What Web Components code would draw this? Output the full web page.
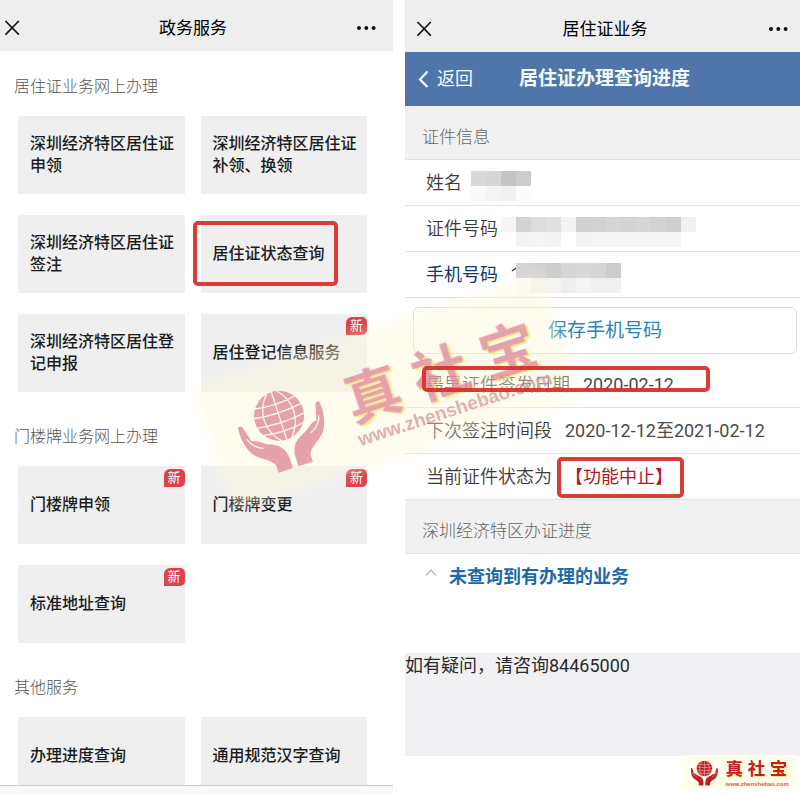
<!DOCTYPE html>
<html lang="zh-CN">
<head>
<meta charset="UTF-8">
<meta name="viewport" content="width=device-width, initial-scale=1.0">
<title>政务服务</title>
<style>
    body {
        margin: 0;
        background: #fff;
        font-family: Roboto, "Noto Sans CJK SC", sans-serif;
        color: #222;
    }
    main {
        position: relative;
        display: grid;
        grid-template-columns: 393fr 395fr;
        gap: 12px;
        height: 100vh;
        overflow: hidden;
    }
    .watermark {
        position: absolute;
        left: calc(50% - 12px); top: calc(50% - 5px);
        width: 366px; height: 130px;
        transform: translate(-50%, -50%) rotate(-18deg);
        pointer-events: none;
    }
    .corner {
        position: absolute;
        right: 4px; bottom: 5px;
        width: 114px; height: 34px;
    }
</style>
</head>
<body>
<main>
    <phone-screen class="services" bar>
        <nav-bar slot="top">政务服务</nav-bar>
        <service-group label="居住证业务网上办理">
            <service-tile>深圳经济特区居住证申领</service-tile>
            <service-tile>深圳经济特区居住证补领、换领</service-tile>
            <service-tile>深圳经济特区居住证签注</service-tile>
            <service-tile>居住证状态查询<mark-box slot="mark" style="--left: -8px; --top: 6px; --width: 145px; --height: 65px"></mark-box></service-tile>
            <service-tile>深圳经济特区居住登记申报</service-tile>
            <service-tile badge="新">居住登记信息服务</service-tile>
        </service-group>
        <service-group label="门楼牌业务网上办理">
            <service-tile badge="新">门楼牌申领</service-tile>
            <service-tile badge="新">门楼牌变更</service-tile>
            <service-tile badge="新">标准地址查询</service-tile>
        </service-group>
        <service-group label="其他服务">
            <service-tile>办理进度查询</service-tile>
            <service-tile>通用规范汉字查询</service-tile>
        </service-group>
    </phone-screen>

    <phone-screen>
        <nav-bar slot="top" inset>居住证业务</nav-bar>
        <title-bar slot="top" back="返回">居住证办理查询进度</title-bar>
        <section-label>证件信息</section-label>
        <info-row label="姓名"><masked-value kind="name"></masked-value></info-row>
        <info-row label="证件号码"><masked-value kind="id"></masked-value></info-row>
        <info-row label="手机号码" strong><masked-value kind="phone"></masked-value></info-row>
        <save-button>保存手机号码</save-button>
        <info-row label="最早证件签发日期">2020-02-12<mark-box slot="mark" style="--left: 17px; --top: 4px; --width: 288px; --height: 26px"></mark-box></info-row>
        <info-row label="下次签注时间段">2020-12-12至2021-02-12</info-row>
        <info-row label="当前证件状态为" alert>【功能中止】<mark-box slot="mark" style="--left: 152px; --top: 3px; --width: 127px; --height: 41px"></mark-box></info-row>
        <section-label>深圳经济特区办证进度</section-label>
        <progress-item>未查询到有办理的业务</progress-item>
        <help-note>如有疑问，请咨询84465000</help-note>
    </phone-screen>

    <brand-mark class="watermark" faded></brand-mark>
    <brand-mark class="corner"></brand-mark>
</main>

<script>
class PhoneScreen extends HTMLElement {
    constructor() {
        super();
        this.attachShadow({ mode: "open" });
    }

    connectedCallback() {
        this.shadowRoot.innerHTML = `
            <style>
                :host {
                    display: flex;
                    flex-direction: column;
                    min-width: 0;
                    min-height: 0;
                }
                .content {
                    flex: 1;
                    min-height: 0;
                    overflow: hidden;
                }
                .bar {
                    height: 8px;
                    border-top: 1px solid #ccc;
                    background: #f8f8f8;
                }
            </style>
            <slot name="top"></slot>
            <div class="content"><slot></slot></div>
            ${this.hasAttribute("bar") ? `<div class="bar"></div>` : ""}
        `;
    }
}

customElements.define("phone-screen", PhoneScreen);

class NavBar extends HTMLElement {
    constructor() {
        super();
        this.attachShadow({ mode: "open" });
    }

    connectedCallback() {
        this.shadowRoot.innerHTML = `
            <style>
                :host {
                    display: block;
                    background: #eee;
                }
                header {
                    display: grid;
                    grid-template-columns: 1fr auto 1fr;
                    align-items: center;
                    height: 51px;
                    padding: 4px 13px 0 0;
                    box-sizing: border-box;
                }
                :host([inset]) header {
                    height: 52px;
                    padding: 5px 8px 0 7px;
                }
                h1 {
                    margin: 0;
                    padding-left: 6px;
                    font-size: 17px;
                    line-height: 24px;
                    font-weight: 400;
                    color: #000;
                }
                button {
                    display: block;
                    border: none;
                    background: none;
                    padding: 0;
                    height: 24px;
                }
                .more {
                    justify-self: end;
                }
                svg {
                    display: block;
                }
            </style>
            <header>
                <button aria-label="关闭">
                    <svg width="24" height="24" viewBox="0 0 24 24" fill="none" stroke="#111" stroke-width="1.6"><path d="M5.5 5 L18.8 18.6 M18.8 5 L5.5 18.6"/></svg>
                </button>
                <h1><slot></slot></h1>
                <button class="more" aria-label="更多">
                    <svg width="28" height="24" viewBox="0 0 28 24" fill="#111"><circle cx="7" cy="12" r="2"/><circle cx="14.3" cy="12" r="2"/><circle cx="21.6" cy="12" r="2"/></svg>
                </button>
            </header>
        `;
    }
}

customElements.define("nav-bar", NavBar);

class TitleBar extends HTMLElement {
    constructor() {
        super();
        this.attachShadow({ mode: "open" });
    }

    connectedCallback() {
        this.shadowRoot.innerHTML = `
            <style>
                :host {
                    display: grid;
                    grid-template-columns: 1fr auto 1fr;
                    align-items: center;
                    height: 54px;
                    padding: 0 12px;
                    background: #4f75aa;
                    color: #f2fbff;
                }
                a {
                    display: flex;
                    align-items: center;
                    gap: 8px;
                    font-size: 18px;
                    line-height: 26px;
                    color: inherit;
                    text-decoration: none;
                }
                h2 {
                    margin: 0;
                    padding-left: 4px;
                    font-size: 19px;
                    line-height: 26px;
                    font-weight: 700;
                }
            </style>
            <a href="#">
                <svg width="12" height="18" viewBox="0 0 12 18" fill="none" stroke="currentColor" stroke-width="2.2"><path d="M10.5 1.5 L3 9.5 L10.5 17"/></svg>
                ${this.getAttribute("back")}
            </a>
            <h2><slot></slot></h2>
        `;
    }
}

customElements.define("title-bar", TitleBar);

class ServiceGroup extends HTMLElement {
    constructor() {
        super();
        this.attachShadow({ mode: "open" });
    }

    connectedCallback() {
        this.shadowRoot.innerHTML = `
            <style>
                :host {
                    display: block;
                    padding: 24px 26px 9px 18px;
                }
                h2 {
                    margin: 0 0 17px -4px;
                    font-size: 16px;
                    line-height: 24px;
                    font-weight: 300;
                    color: #555;
                }
                .grid {
                    display: grid;
                    grid-template-columns: 1fr 1fr;
                    gap: 21px 16px;
                }
            </style>
            <h2>${this.getAttribute("label")}</h2>
            <div class="grid"><slot></slot></div>
        `;
    }
}

customElements.define("service-group", ServiceGroup);

class ServiceTile extends HTMLElement {
    constructor() {
        super();
        this.attachShadow({ mode: "open" });
    }

    connectedCallback() {
        const badge = this.getAttribute("badge");
        this.shadowRoot.innerHTML = `
            <style>
                :host {
                    display: block;
                    position: relative;
                }
                a {
                    display: flex;
                    align-items: center;
                    height: 78px;
                    padding: 0 8px 0 12px;
                    box-sizing: border-box;
                    background: #efeff0;
                    font-size: 16px;
                    line-height: 22px;
                    font-weight: 500;
                    color: #1c1c1c;
                    text-decoration: none;
                }
                .badge {
                    position: absolute;
                    right: 0; top: 3px;
                    width: 21px; height: 18px;
                    border-radius: 6px 5px 5px 0;
                    background: #dc424a;
                    color: #fff;
                    font-size: 13px;
                    line-height: 17px;
                    text-align: center;
                }
            </style>
            <a href="#"><span><slot></slot></span></a>
            ${badge ? `<span class="badge">${badge}</span>` : ""}
            <slot name="mark"></slot>
        `;
    }
}

customElements.define("service-tile", ServiceTile);

// red highlight frame, drawn over the row or tile it belongs to
class MarkBox extends HTMLElement {
    constructor() {
        super();
        this.attachShadow({ mode: "open" });
        this.shadowRoot.innerHTML = `
            <style>
                :host {
                    position: absolute;
                    z-index: 1;
                    left: var(--left); top: var(--top);
                    width: var(--width); height: var(--height);
                    box-sizing: border-box;
                    border: 4px solid #d8322c;
                    border-radius: 5px;
                    opacity: .95;
                    pointer-events: none;
                }
            </style>
        `;
    }
}

customElements.define("mark-box", MarkBox);

class SectionLabel extends HTMLElement {
    constructor() {
        super();
        this.attachShadow({ mode: "open" });
        this.shadowRoot.innerHTML = `
            <style>
                :host {
                    display: block;
                    padding: 18px 17px 9px;
                    border-bottom: 1px solid #e2e2e2;
                    background: #f1f1f1;
                }
                h3 {
                    margin: 0;
                    font-size: 17px;
                    line-height: 26px;
                    font-weight: 300;
                    color: #666;
                }
            </style>
            <h3><slot></slot></h3>
        `;
    }
}

customElements.define("section-label", SectionLabel);

class InfoRow extends HTMLElement {
    constructor() {
        super();
        this.attachShadow({ mode: "open" });
    }

    connectedCallback() {
        this.shadowRoot.innerHTML = `
            <style>
                :host {
                    display: flex;
                    align-items: center;
                    gap: 13px;
                    position: relative;
                    height: 46px;
                    padding: 0 21px;
                    box-sizing: border-box;
                    border-bottom: 1px solid #e2e2e2;
                    font-size: 18px;
                    line-height: 26px;
                    color: #4a4a4a;
                }
                .label {
                    font-weight: 350;
                    color: #3a3a3a;
                }
                :host([strong]) .label {
                    font-weight: 400;
                    color: #14366b;
                }
                :host([alert]) .value {
                    color: #b3161b;
                }
            </style>
            <span class="label">${this.getAttribute("label")}</span>
            <span class="value"><slot></slot></span>
            <slot name="mark"></slot>
        `;
    }
}

customElements.define("info-row", InfoRow);

// pixelated cover for private values: grey level of each 15px cell
const MASKS = {
    name: { start: -4, cells: ["d9", "d6", "c4", "cc"], shade: ["fa", "f4", "f1", "fc"] },
    id: { start: -10, cells: ["f5", "d3", "dd", "e0", "f2", "d0", "d2", "d5", "d3", "d6", "d2", "cf", "f0"], shade: ["ff", "f3", "f4", "f3", "ff", "f3", "f4", "f5", "f5", "f4", "f4", "f5", "ff"] },
    phone: { start: 5, cells: ["d4", "d2", "cd", "d6", "d8", "d5", "cc"], shade: ["fb", "f2", "f4", "ee", "f5", "f0", "f0"] }
};

class MaskedValue extends HTMLElement {
    constructor() {
        super();
        this.attachShadow({ mode: "open" });
    }

    connectedCallback() {
        const kind = this.getAttribute("kind");
        const mask = MASKS[kind];
        const row = (list, y) => list
            .map((c, i) => `<rect x="${mask.start + i * 15}" y="${y}" width="15" height="15" fill="#${c}${c}${c}"/>`)
            .join("");

        this.shadowRoot.innerHTML = `
            <style>
                :host, svg {
                    display: block;
                }
                svg {
                    overflow: visible;
                }
            </style>
            <svg width="200" height="24" viewBox="0 0 200 24" shape-rendering="crispEdges" role="img" aria-label="已隐藏">
                ${kind === "phone" ? `<path d="M1 8 L5 5" stroke="#333" stroke-width="1.4" shape-rendering="auto"/>` : ""}
                ${row(mask.cells, 0)}
                ${row(mask.shade, 15)}
            </svg>
        `;
    }
}

customElements.define("masked-value", MaskedValue);

class SaveButton extends HTMLElement {
    constructor() {
        super();
        this.attachShadow({ mode: "open" });
        this.shadowRoot.innerHTML = `
            <style>
                :host {
                    display: block;
                    padding: 9px 3px 8px 8px;
                }
                button {
                    display: block;
                    width: 100%;
                    height: 47px;
                    padding: 0;
                    border: 1px solid #d9dcdd;
                    border-radius: 6px;
                    background: #fff;
                    color: #2a83b8;
                    font-family: inherit;
                    font-size: 19px;
                    line-height: 26px;
                }
            </style>
            <button><slot></slot></button>
        `;
    }
}

customElements.define("save-button", SaveButton);

class ProgressItem extends HTMLElement {
    constructor() {
        super();
        this.attachShadow({ mode: "open" });
        this.shadowRoot.innerHTML = `
            <style>
                :host {
                    display: flex;
                    gap: 12px;
                    min-height: 89px;
                    padding: 10px 20px 0;
                    font-size: 18px;
                    line-height: 26px;
                    font-weight: 700;
                    color: #1d69a8;
                }
                svg {
                    margin-top: 4px;
                }
            </style>
            <svg width="12" height="9" viewBox="0 0 12 9" fill="none" stroke="#bbb" stroke-width="1.5"><path d="M1 7.5 L6 2 L11 7.5"/></svg>
            <span><slot></slot></span>
        `;
    }
}

customElements.define("progress-item", ProgressItem);

class HelpNote extends HTMLElement {
    constructor() {
        super();
        this.attachShadow({ mode: "open" });
        this.shadowRoot.innerHTML = `
            <style>
                :host {
                    display: block;
                    min-height: 103px;
                    background: #f1f1f3;
                    font-size: 18px;
                    line-height: 26px;
                    color: #2a2a2a;
                }
            </style>
            <slot></slot>
        `;
    }
}

customElements.define("help-note", HelpNote);

class BrandMark extends HTMLElement {
    constructor() {
        super();
        this.attachShadow({ mode: "open" });
    }

    connectedCallback() {
        const faded = this.hasAttribute("faded");
        const nameY = faded ? 18 : 9;
        const urlY = faded ? 43 : 46;
        const hand = `
            <path class="ink" d="M-43 1 C-43 -3 -39 -3 -38 1 L-34 16 C-29 15 -24 22 -16 25 C-6 29 -3 37 -3 44 L-3 54 L-18 54 L-18 46 C-22 38 -32 36 -38 27 C-42 20 -44 10 -43 1 Z"/>
            <path class="line" d="M-38 12 C-36 19 -32 23 -25 26"/>`;

        this.shadowRoot.innerHTML = `
            <style>
                :host {
                    display: block;
                    --ink: #bf2026;
                    --url: #d2603a;
                    --glow: #ffd84a;
                    background: #fffdec;
                }
                :host([faded]) {
                    --ink: #e08997;
                    --url: #dc9a98;
                    --glow: #ffe67a;
                    background: none;
                }
                .haze {
                    display: none;
                }
                :host([faded]) .haze {
                    display: block;
                    fill: #fff8da;
                    opacity: .42;
                    filter: blur(6px);
                }
                :host([faded]) .art {
                    opacity: .78;
                }
                svg {
                    display: block;
                    width: 100%;
                    height: 100%;
                    overflow: visible;
                }
                .ink {
                    fill: var(--ink);
                }
                .line {
                    fill: none;
                    stroke: #fff8ec;
                    stroke-width: 1.3;
                }
                .name {
                    font: 700 56px "Noto Sans CJK SC", sans-serif;
                    text-anchor: middle;
                    fill: var(--ink);
                    filter: drop-shadow(2px 2px 0 var(--glow));
                }
                .url {
                    font: 700 19px "Liberation Sans", sans-serif;
                    fill: var(--url);
                }
            </style>
            <svg viewBox="-183 -54 366 108">
                <rect class="haze" x="-183" y="-65" width="366" height="130"/>
                <g class="art">
                    <g transform="translate(-111 -11)">
                        <circle class="ink" r="25"/>
                        <g class="line">
                            <path d="M0 -25 V25 M-5 -25 C-19 -10 -19 10 -5 25 M5 -25 C19 -10 19 10 5 25"/>
                            <path d="M-21 -14 Q0 -10 21 -14 M-25 -5 Q0 -1 25 -5 M-25 5 Q0 9 25 5 M-21 14 Q0 18 21 14"/>
                        </g>
                        ${hand}
                        <g transform="scale(-1 1)">${hand}</g>
                    </g>
                    <g class="name">
                        <text x="-15" y="${nameY}">真</text>
                        <text x="56" y="${nameY}">社</text>
                        <text x="127" y="${nameY}">宝</text>
                    </g>
                    <text class="url" x="-43" y="${urlY}">www.zhenshebao.com</text>
                </g>
            </svg>
        `;
    }
}

customElements.define("brand-mark", BrandMark);
</script>
</body>
</html>
